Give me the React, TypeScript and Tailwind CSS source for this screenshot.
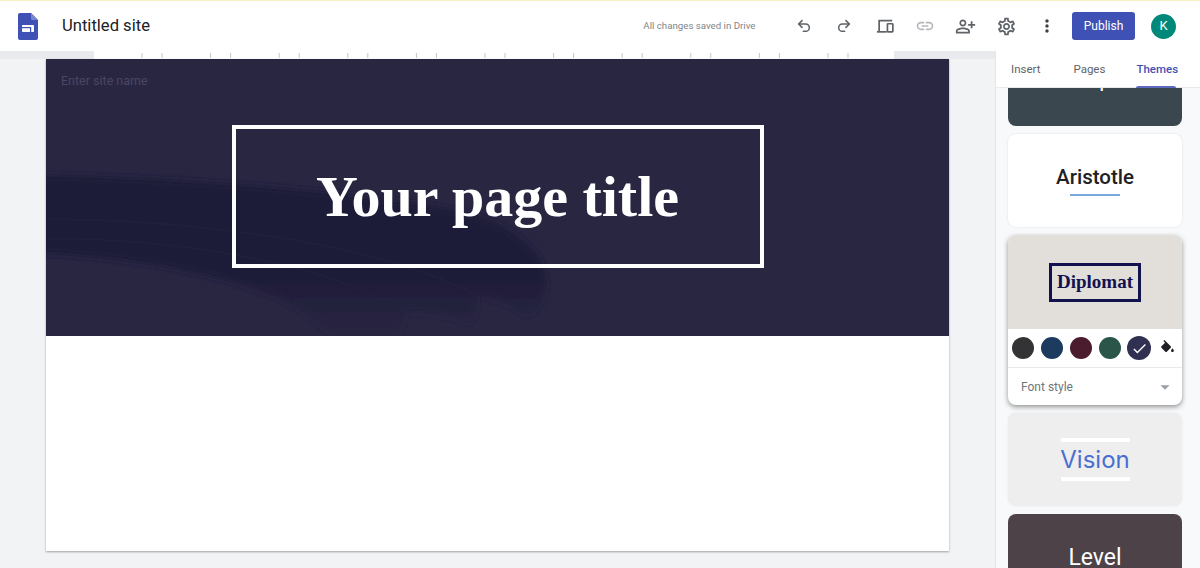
import React from "react";
import { Undo2, Redo2 } from "lucide-react";
import {
  MdLink,
  MdOutlinePersonAddAlt,
  MdOutlineSettings,
  MdMoreVert,
  MdCheck,
  MdArrowDropDown,
} from "react-icons/md";

const sans = "font-['Roboto','Liberation_Sans',sans-serif]";

function SitesLogo() {
  return (
    <svg width="20" height="27" viewBox="0 0 20 27" className="shrink-0">
      <path d="M2 0H13L20 7V25a2 2 0 0 1-2 2H2a2 2 0 0 1-2-2V2a2 2 0 0 1 2-2Z" fill="#3f51b5" />
      <path d="M13 0L20 7H14.5A1.5 1.5 0 0 1 13 5.5Z" fill="#7986cb" />
      <rect x="4" y="12" width="12" height="7" rx="0.8" fill="#fff" />
      <rect x="4" y="14" width="8" height="1.2" fill="#3f51b5" />
      <rect x="12" y="14" width="1.2" height="5" fill="#3f51b5" />
    </svg>
  );
}

function DevicesIcon() {
  return (
    <svg width="18" height="18" viewBox="0 0 20 20" fill="none" stroke="#5f6368" strokeWidth="1.9">
      <path d="M3.5 15.5V4h14.5" />
      <path d="M1 16.5h11" />
      <rect x="12.7" y="7.5" width="6" height="9" rx="0.6" />
    </svg>
  );
}

function BucketIcon() {
  return (
    <svg width="17" height="17" viewBox="0 0 24 24" fill="#202124">
      <path d="M16.56 8.94 7.62 0 6.21 1.41l2.38 2.38-5.15 5.15c-.59.59-.59 1.54 0 2.12l5.5 5.5c.29.29.68.44 1.06.44s.77-.15 1.06-.44l5.5-5.5c.59-.58.59-1.53 0-2.12Z" />
      <path d="M19 11.5s-2 2.17-2 3.5c0 1.1.9 2 2 2s2-.9 2-2c0-1.33-2-3.5-2-3.5Z" />
    </svg>
  );
}

const swatches = ["#333335", "#1d3a5f", "#4b1c2e", "#2a5548"];

function Header() {
  return (
    <header className={`flex h-[51px] shrink-0 items-center border-t border-[#f6efc0] bg-white pl-[18px] ${sans}`}>
      <SitesLogo />
      <span className="ml-[24px] text-[16.6px] text-[#202124]">Untitled site</span>
      <span className="ml-auto text-[9.7px] text-[#80868b]">All changes saved in Drive</span>
      <div className="ml-[28px] flex items-center text-[#5f6368]">
        <span className="flex w-[40.5px] items-center justify-center">
          <Undo2 size={16} strokeWidth={2.3} />
        </span>
        <span className="flex w-[40.5px] items-center justify-center">
          <Redo2 size={16} strokeWidth={2.3} />
        </span>
        <span className="flex w-[40.5px] items-center justify-center">
          <DevicesIcon />
        </span>
        <span className="flex w-[40.5px] items-center justify-center text-[#b5b8bc]">
          <MdLink size={20} />
        </span>
        <span className="flex w-[40.5px] items-center justify-center">
          <MdOutlinePersonAddAlt size={21} />
        </span>
        <span className="flex w-[40.5px] items-center justify-center">
          <MdOutlineSettings size={21} />
        </span>
        <span className="flex w-[40.5px] items-center justify-center text-[#3c4043]">
          <MdMoreVert size={20} />
        </span>
      </div>
      <button className="ml-[5px] flex h-[28px] w-[63px] items-center justify-center rounded-[3px] bg-[#3f51b5] text-[12px] text-white">
        Publish
      </button>
      <span className="ml-[16px] mr-[24px] flex h-[25px] w-[25px] items-center justify-center rounded-full bg-[#00897b] text-[13px] text-white">
        K
      </span>
    </header>
  );
}

function Ruler() {
  const ticks = Array.from({ length: 12 }, (_, i) => 48 + i * 68.6);
  return (
    <div className="flex h-[8px] shrink-0 bg-[#e8eaed]">
      <div className="w-[94px] shrink-0" />
      <svg width="800" height="8" className="shrink-0 bg-white">
        {ticks.map((x) => (
          <g key={x} stroke="#c4c7cb" strokeWidth="1">
            <line x1={x} x2={x} y1="2" y2="7" />
            <line x1={x + 20} x2={x + 20} y1="2" y2="7" />
          </g>
        ))}
      </svg>
    </div>
  );
}

function Hero() {
  return (
    <div className="relative flex h-[277px] items-center justify-center overflow-hidden bg-[#292642]">
      <svg viewBox="0 0 903 277" className="absolute inset-0 h-full w-full">
        <defs>
          <filter id="soft" x="-10%" y="-10%" width="120%" height="120%">
            <feGaussianBlur stdDeviation="3" />
          </filter>
          <linearGradient id="band" gradientUnits="userSpaceOnUse" x1="0" y1="116" x2="0" y2="277">
            <stop offset="0" stopColor="#1d1b38" />
            <stop offset="0.55" stopColor="#1c1a37" />
            <stop offset="1" stopColor="#292642" />
          </linearGradient>
        </defs>
        <path
          filter="url(#soft)"
          fill="url(#band)"
          d="M-10 116C120 118 320 132 422 154C470 168 500 195 500 222C500 240 492 252 480 256C470 248 450 240 430 236C432 245 430 256 424 264C410 258 385 252 358 254C358 262 355 270 350 277H285C250 228 120 200 -10 194Z"
        />
        <g fill="none" stroke="#2a2744" strokeOpacity="0.4" strokeWidth="1.5">
          <path d="M-10 160C120 160 320 178 430 236" />
          <path d="M-10 180C110 178 280 200 358 254" />
        </g>
      </svg>
      <div className="relative -mt-[2px] flex h-[143px] w-[532px] items-center justify-center border-[4px] border-white">
        <h1 className="font-['Liberation_Serif',serif] text-[58px] font-bold leading-none text-white">
          Your page title
        </h1>
      </div>
      <span className={`absolute left-[15px] top-[13px] text-[12.5px] text-[#4a4763] ${sans}`}>Enter site name</span>
    </div>
  );
}

function Sidebar() {
  return (
    <aside className={`flex w-[205px] shrink-0 flex-col border-l border-[#e3e5e8] bg-[#f8f9fa] ${sans}`}>
      <div className="flex h-[37px] shrink-0 items-start border-b border-[#e8eaed] bg-white pl-[15px] pt-[10px] text-[11.5px] text-[#5f6368]">
        <span>Insert</span>
        <span className="ml-[33px]">Pages</span>
        <span className="relative ml-[31px] h-[27px] font-medium text-[#3f51b5]">
          Themes
          <span className="absolute bottom-0 left-0 h-[2px] w-[40px] rounded-t-sm bg-[#5c6bc0]" />
        </span>
      </div>
      <div className="flex flex-1 flex-col gap-[8px] overflow-hidden pl-[12px] pr-[18px]">
        <div className="-mt-[55px] flex h-[93px] shrink-0 items-center justify-center rounded-[8px] bg-[#3b474e] pb-[2px] text-[22px] text-white">
          Simple
        </div>
        <div className="flex h-[93px] shrink-0 flex-col items-center justify-center rounded-[8px] bg-white shadow-[0_0_2px_rgba(60,64,67,0.15)]">
          <span className="-mt-[1px] text-[20.5px] font-medium leading-[26px] text-[#202124]">Aristotle</span>
          <span className="mt-[4px] h-[2px] w-[50px] bg-[#7aa7dc]" />
        </div>
        <div className="flex h-[170px] shrink-0 flex-col overflow-hidden rounded-[8px] bg-white shadow-[0_2px_5px_rgba(60,64,67,0.55)]">
          <div className="flex h-[94px] items-center justify-center bg-[#e2dfdb]">
            <span className="flex h-[39px] w-[92px] items-center justify-center border-[3px] border-[#12124f] font-['Liberation_Serif',serif] text-[19px] font-bold text-[#12124f]">
              Diplomat
            </span>
          </div>
          <div className="flex h-[39px] items-center border-b border-[#e8eaed] pl-[4px]">
            {swatches.map((c) => (
              <span key={c} className="mr-[7px] h-[22px] w-[22px] rounded-full" style={{ backgroundColor: c }} />
            ))}
            <span className="-ml-[1px] flex h-[24px] w-[24px] items-center justify-center rounded-full bg-[#303052] text-white">
              <MdCheck size={17} />
            </span>
            <span className="ml-[5px] flex h-[22px] w-[22px] items-center justify-center rounded-full bg-white">
              <BucketIcon />
            </span>
          </div>
          <div className="flex flex-1 items-center justify-between pl-[13px] pr-[6px] text-[12px] text-[#70757a]">
            <span>Font style</span>
            <MdArrowDropDown size={22} className="text-[#9aa0a6]" />
          </div>
        </div>
        <div className="flex h-[93px] shrink-0 flex-col items-center justify-center rounded-[8px] bg-[#eeeeee] shadow-[0_0_2px_rgba(60,64,67,0.1)]">
          <span className="h-[4px] w-[69px] bg-white" />
          <span className="my-[3px] font-['Inter',sans-serif] text-[24px] leading-[29px] text-[#4a6fd0]">Vision</span>
          <span className="h-[4px] w-[69px] bg-white" />
        </div>
        <div className="flex h-[93px] shrink-0 items-center justify-center rounded-[8px] bg-[#4d4248] pb-[5px] text-[23px] text-white">
          Level
        </div>
      </div>
    </aside>
  );
}

export default function App() {
  return (
    <div className="flex h-[568px] w-[1200px] flex-col overflow-hidden bg-white">
      <Header />
      <div className="flex min-h-0 flex-1">
        <div className="flex w-[995px] shrink-0 flex-col bg-[#f1f3f4]">
          <Ruler />
          <main className="ml-[46px] h-[492px] w-[903px] bg-white shadow-[0_1px_2px_rgba(60,64,67,0.45)]">
            <Hero />
          </main>
        </div>
        <Sidebar />
      </div>
    </div>
  );
}
